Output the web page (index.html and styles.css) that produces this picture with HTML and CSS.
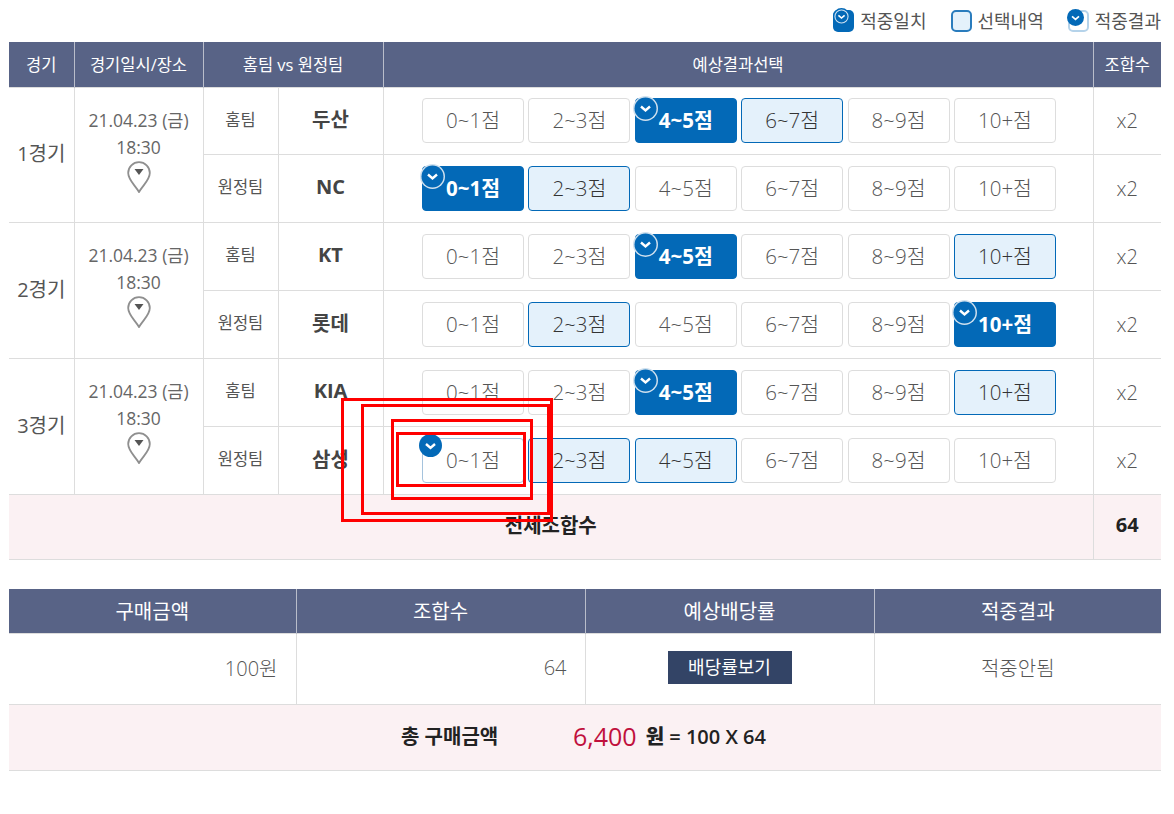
FILE: index.html
```html
<!DOCTYPE html>
<html lang="ko">
<head>
    <meta charset="UTF-8">
    <title>예상결과선택</title>
    <link rel="stylesheet" href="styles.css">
</head>
<body>

<div class="legend">
    <span class="legend-item"><i class="box box-hit"><svg class="check" viewBox="0 0 22 22"><circle cx="11" cy="11" r="11" fill="#0369b7"/><circle cx="11" cy="11" r="8.500" fill="none" stroke="#cfe2f2" stroke-width="1.400"/><path d="M7 9.500 11 13l4-3.500" fill="none" stroke="#fff" stroke-width="2"/></svg></i>적중일치</span>
    <span class="legend-item"><i class="box box-sel"></i>선택내역</span>
    <span class="legend-item"><i class="box box-res"><svg class="check" viewBox="0 0 22 22"><circle cx="11" cy="11" r="11" fill="#0369b7"/><path d="M6.500 9.500 11 13.500l4.500-4" fill="none" stroke="#fff" stroke-width="2.200"/></svg></i>적중결과</span>
</div>

<table class="game-table">
    <colgroup>
        <col class="c-game"><col class="c-date"><col class="c-side"><col class="c-team"><col><col class="c-combo">
    </colgroup>
    <thead>
        <tr><th>경기</th><th>경기일시/장소</th><th colspan="2">홈팀 vs 원정팀</th><th>예상결과선택</th><th>조합수</th></tr>
    </thead>
    <tbody id="games"></tbody>
    <tfoot>
        <tr><td colspan="5" class="sum-label">전체조합수</td><td class="sum-value">64</td></tr>
    </tfoot>
</table>

<table class="buy-table">
    <colgroup>
        <col class="c-buy-side"><col class="c-buy-mid"><col class="c-buy-mid"><col class="c-buy-side">
    </colgroup>
    <thead>
        <tr><th>구매금액</th><th>조합수</th><th>예상배당률</th><th>적중결과</th></tr>
    </thead>
    <tbody>
        <tr>
            <td class="right">100원</td>
            <td class="right">64</td>
            <td><a class="odds-btn">배당률보기</a></td>
            <td>적중안됨</td>
        </tr>
    </tbody>
    <tfoot>
        <tr>
            <td colspan="4">
                <div class="total">
                    <b class="total-label">총 구매금액</b>
                    <span class="total-money">6,400</span>
                    <span class="total-calc"><b>원</b> = 100 X 64</span>
                </div>
            </td>
        </tr>
    </tfoot>
</table>

<!-- 빨간 테두리 -->
<div class="mark mark-1"></div>
<div class="mark mark-2"></div>
<div class="mark mark-3"></div>
<div class="mark mark-4"></div>

<script src="script.js"></script>
</body>
</html>
```

FILE: styles.css
```css
* {
    box-sizing: border-box;
    margin: 0;
    padding: 0;
}

body {
    font-family: 'Open Sans', 'Noto Sans CJK KR', sans-serif;
    background-color: #fff;
    color: #555;
    width: 1174px;
    height: 814px;
    padding: 0 13px 0 9px;
    overflow: hidden;
    position: relative;
}

/* 범례 */
.legend {
    height: 42px;
    display: flex;
    justify-content: flex-end;
    gap: 24px;
    padding-top: 10px;
    font-size: 18px;
    line-height: 22px;
    color: #555;
}

.legend-item {
    display: flex;
    align-items: flex-start;
    gap: 6px;
}

.box {
    display: block;
    position: relative;
    width: 21px;
    height: 22px;
    border-radius: 5px;
}

.box-hit {
    background-color: #0369b7;
}

.box-sel {
    background-color: #e4f1fb;
    border: 2px solid #2a7cbd;
}

.box-res {
    background-color: #fff;
    border: 2px solid #b5d3ea;
}

.check {
    position: absolute;
    display: block;
    width: 17px;
    height: 17px;
    left: 0;
    top: -2px;
}

.box-res .check {
    left: -3px;
    top: -3px;
}

/* 표 */
table {
    width: 1152px;
    border-collapse: collapse;
    table-layout: fixed;
}

th {
    background-color: #586386;
    color: #fff;
    font-weight: 400;
    border-left: 1px solid #b9bdca;
}

th:first-child {
    border-left: none;
}

td {
    border: 1px solid #ddd;
    text-align: center;
}

tr td:first-child {
    border-left: none;
}

tr td:last-child {
    border-right: none;
}

.c-game { width: 65px; }
.c-date { width: 129px; }
.c-side { width: 75px; }
.c-team { width: 105px; }
.c-combo { width: 68px; }
.c-buy-side { width: 287px; }
.c-buy-mid { width: 289px; }

.game-table th {
    height: 45px;
    font-size: 16.5px;
}

.game-table tbody td {
    height: 68px;
    padding: 0;
}

.game-table tbody tr:first-child td {
    height: 67px;
}

.game-no {
    font-size: 20px;
    color: #555;
    padding-bottom: 4px !important;
}

.game-date {
    font-size: 17.5px;
    line-height: 27px;
    color: #666;
    padding-bottom: 20px !important;
}

.pin {
    display: block;
    width: 24px;
    height: 32px;
    margin: 0 auto -10px;
}

.side {
    font-size: 16.5px;
    padding-bottom: 4px !important;
}

.team {
    font-size: 20px;
    font-weight: 700;
    color: #444;
    padding-bottom: 4px !important;
}

.combo {
    font-size: 20px;
    font-weight: 300;
    color: #555;
}

.picks {
    display: flex;
    justify-content: center;
    gap: 4.4px;
    padding-left: 2px;
}

.pick {
    position: relative;
    width: 102px;
    height: 45px;
    border: 1px solid #ddd;
    border-radius: 4px;
    background-color: #fff;
    font-size: 20.5px;
    font-weight: 300;
    line-height: 43px;
    color: #555;
}

.pick.selected {
    background-color: #e4f1fb;
    border-color: #0369b7;
    color: #333;
}

.pick.hit {
    background-color: #0369b7;
    border-color: #0369b7;
    color: #fff;
    font-weight: 700;
}

.pick.result {
    border-color: #a5c3dd;
}

.pick svg {
    position: absolute;
    display: block;
    width: 25px;
    height: 25px;
    left: -3px;
    top: -3px;
}

.pick.result svg {
    width: 23px;
    height: 23px;
    left: -4px;
    top: -5px;
}

.sum-label, .sum-value {
    background-color: #fbf1f3;
    height: 65px;
    font-size: 20px;
    font-weight: 700;
    color: #222;
    padding-bottom: 4px;
}

.sum-value {
    border-left: 1px solid #ddd;
}

/* 구매 */
.buy-table {
    margin-top: 29px;
}

.buy-table th {
    height: 45px;
    font-size: 20px;
}

.buy-table tbody td {
    height: 71px;
    font-size: 20px;
    font-weight: 300;
    color: #555;
    padding-bottom: 4px;
}

.buy-table .right {
    text-align: right;
    padding-right: 18px;
}

.odds-btn {
    display: block;
    width: 124px;
    height: 33px;
    margin: 0 auto;
    background-color: #334466;
    color: #fff;
    font-size: 18px;
    font-weight: 400;
    line-height: 32px;
}

.buy-table tfoot td {
    height: 66px;
    background-color: #fbf1f3;
    padding-bottom: 4px;
}

.total {
    display: flex;
    align-items: center;
    text-align: left;
    color: #222;
    font-size: 20px;
    padding-left: 392px;
}

.total-label {
    width: 172px;
}

.total-money {
    font-size: 25px;
    color: #c0103c;
    margin-right: 9px;
}

.total-calc {
    font-size: 20px;
    font-weight: 600;
}

/* 빨간 테두리 */
.mark {
    position: absolute;
    border: 3px solid #f00;
    pointer-events: none;
}

.mark-1 { left: 341px; top: 398px; width: 212px; height: 124px; }
.mark-2 { left: 361px; top: 404px; width: 189px; height: 111px; }
.mark-3 { left: 391px; top: 419px; width: 142px; height: 81px; }
.mark-4 { left: 396px; top: 432px; width: 130px; height: 55px; }
```

FILE: script.js
```js
// 경기 데이터: 0 없음, 1 선택, 2 적중, 3 결과
const games = [
    { no: '1경기', home: '두산', away: 'NC',
      homePicks: [0, 0, 2, 1, 0, 0], awayPicks: [2, 1, 0, 0, 0, 0] },
    { no: '2경기', home: 'KT', away: '롯데',
      homePicks: [0, 0, 2, 0, 0, 1], awayPicks: [0, 1, 0, 0, 0, 2] },
    { no: '3경기', home: 'KIA', away: '삼성',
      homePicks: [0, 0, 2, 0, 0, 1], awayPicks: [3, 1, 1, 0, 0, 0] }
];
const labels = ['0~1점', '2~3점', '4~5점', '6~7점', '8~9점', '10+점'];
const states = ['', ' selected', ' hit', ' result'];

const checkHit = '<svg viewBox="0 0 25 25"><circle cx="12.500" cy="12.500" r="12.500" fill="#cfe0ee"/><circle cx="12.500" cy="12.500" r="11" fill="#0369b7"/><path d="M8 10.500 12.500 14.500l4.500-4" fill="none" stroke="#fff" stroke-width="2.400"/></svg>';
const checkResult = '<svg viewBox="0 0 23 23"><circle cx="11.500" cy="11.500" r="11.500" fill="#0369b7"/><path d="M7 10 11.500 14l4.500-4" fill="none" stroke="#fff" stroke-width="2.400"/></svg>';
const pin = '<svg class="pin" viewBox="0 0 24 32"><path d="M12 31C8 24 1.200 19 1.200 12a10.800 10.800 0 0 1 21.600 0c0 7-6.800 12-10.800 19z" fill="#fff" stroke="#8f8f8f" stroke-width="1.800"/><path d="M7.500 8h9L12 14z" fill="#555"/></svg>';

function picks(list) {
    let html = '<div class="picks">';
    list.forEach(function (state, i) {
        let icon = '';
        if (state === 2) icon = checkHit;
        if (state === 3) icon = checkResult;
        html += '<div class="pick' + states[state] + '">' + icon + labels[i] + '</div>';
    });
    return html + '</div>';
}

let rows = '';
games.forEach(function (g) {
    rows += '<tr class="home">'
        + '<td rowspan="2" class="game-no">' + g.no + '</td>'
        + '<td rowspan="2" class="game-date">21.04.23 (금)<br>18:30' + pin + '</td>'
        + '<td class="side">홈팀</td><td class="team">' + g.home + '</td>'
        + '<td>' + picks(g.homePicks) + '</td><td class="combo">x2</td></tr>';
    rows += '<tr class="away">'
        + '<td class="side">원정팀</td><td class="team">' + g.away + '</td>'
        + '<td>' + picks(g.awayPicks) + '</td><td class="combo">x2</td></tr>';
});
document.getElementById('games').innerHTML = rows;
```
